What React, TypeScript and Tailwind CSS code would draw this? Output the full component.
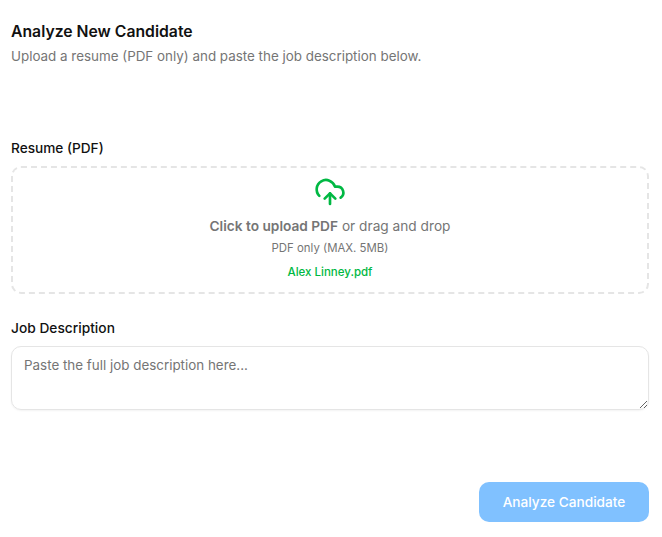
import { CloudUpload } from "lucide-react";

export default function App() {
  return (
    <div className="min-h-screen bg-white px-[11px] pt-[22px] text-[#111111]" style={{ fontFamily: "Inter, sans-serif" }}>
      <h1 className="text-[15.75px] leading-[20px] font-semibold">Analyze New Candidate</h1>
      <p className="mt-[4px] text-[13.4px] leading-[20px] text-[#757575]">Upload a resume (PDF only) and paste the job description below.</p>

      <label className="mt-[72px] block text-[13.65px] leading-[20px] font-medium">Resume (PDF)</label>
      <div className="mt-[8px] flex h-[128px] w-[638px] flex-col items-center rounded-[10px] border-2 border-dashed border-[#e5e5e5] pt-[8px]">
        <CloudUpload size={32} strokeWidth={2} className="text-[#00b843]" />
        <p className="mt-[8px] text-[13.7px] leading-[20px] text-[#757575]"><span className="font-semibold">Click to upload PDF</span> or drag and drop</p>
        <p className="mt-[2px] text-[11.4px] leading-[20px] text-[#757575]">PDF only (MAX. 5MB)</p>
        <p className="mt-[4px] text-[11.5px] leading-[20px] font-[450] text-[#00b843]">Alex Linney.pdf</p>
      </div>

      <label className="mt-[24px] block text-[13.75px] leading-[20px] font-medium">Job Description</label>
      <textarea
        rows={2}
        placeholder="Paste the full job description here..."
        className="mt-[8px] block h-[64px] w-[638px] rounded-[10px] border border-[#e5e5e5] px-[12px] py-[8px] text-[13.4px] leading-[20px] shadow-xs outline-none placeholder:text-[#757575]"
      />

      <div className="mt-[72px] flex w-[638px] justify-end">
        <button className="h-[40px] w-[170px] rounded-[10px] bg-[#80c1ff] pt-[1px] text-[13.65px] font-medium text-white">Analyze Candidate</button>
      </div>
    </div>
  );
}
